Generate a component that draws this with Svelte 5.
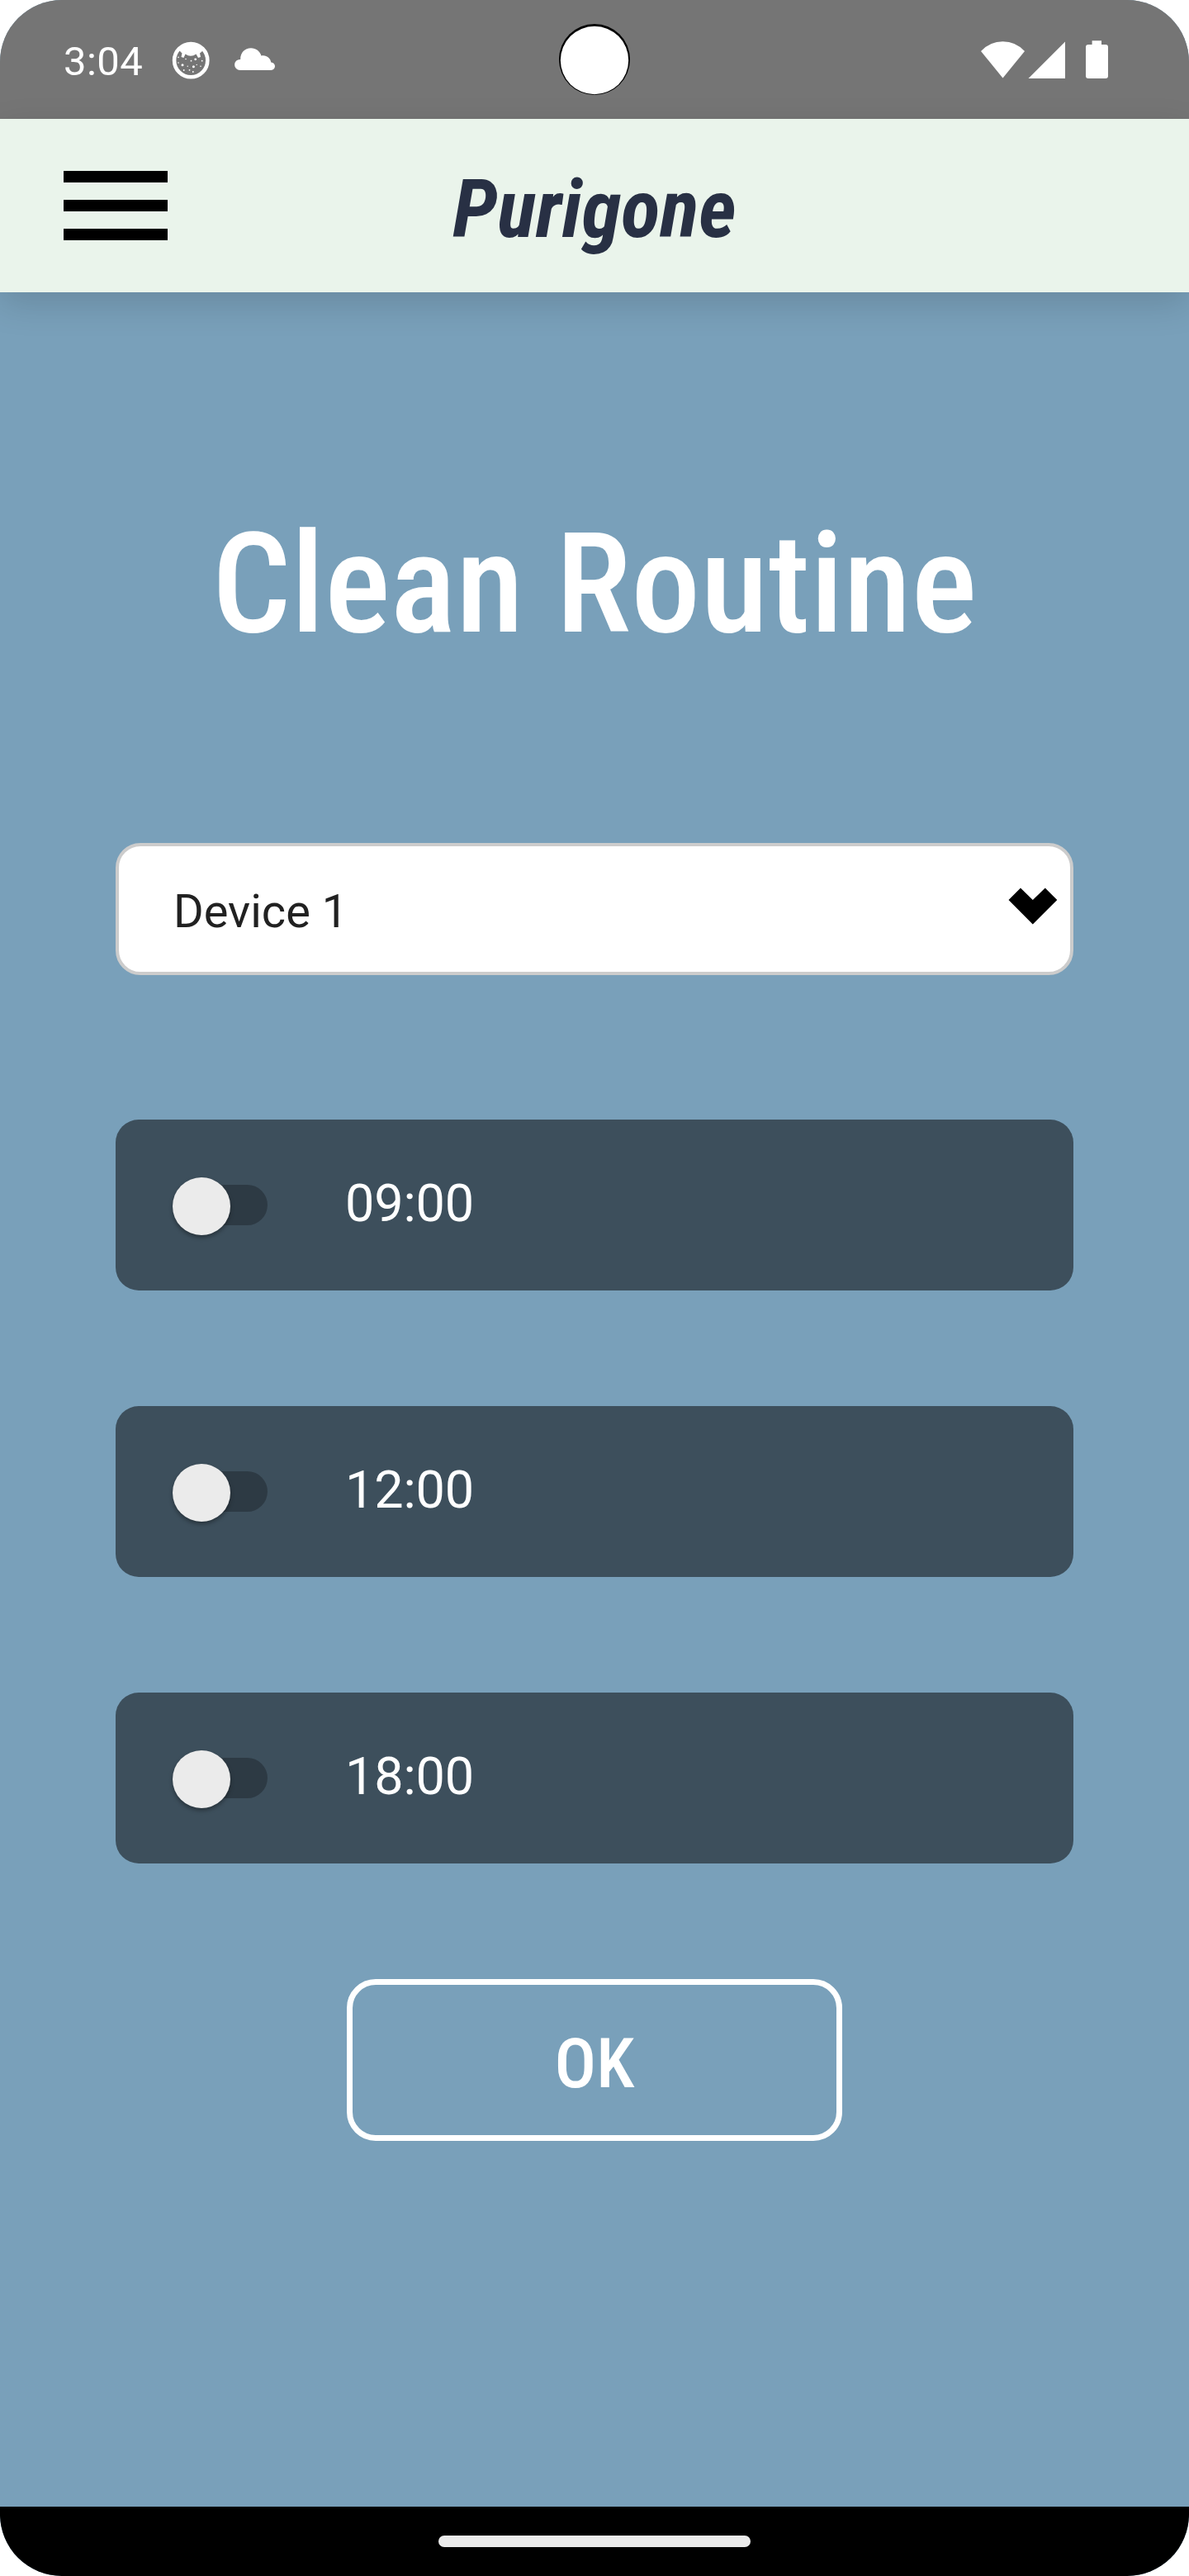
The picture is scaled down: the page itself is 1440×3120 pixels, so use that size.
<script>
  let routines = $state([
    { time: '09:00', on: false },
    { time: '12:00', on: false },
    { time: '18:00', on: false }
  ]);
</script>

<div class="phone">
  <div class="status">
    <span class="clock">3:04</span>
    <svg class="face" width="46" height="46" viewBox="0 0 46 46">
      <circle cx="23.2" cy="23.2" r="20.1" fill="none" stroke="#fff" stroke-width="4.6" />
      <path
        d="M8 8 Q23 -2 38 8 L36.5 12.5 L34 14.5 L35 19 L32 20 L29.5 15.5 Q23 20 16.5 15.5 L14.5 20 L11.5 19 L12.5 14.5 L9.5 11.5Z"
        fill="#fff"
      />
      <g fill="#fff">
        <circle cx="13" cy="28.7" r="1.5" /><circle cx="26.4" cy="30.8" r="1.5" />
        <circle cx="28.7" cy="21.8" r="1.4" /><circle cx="8" cy="19.4" r=".8" />
        <circle cx="8" cy="26" r=".8" /><circle cx="17" cy="21.5" r=".8" />
        <circle cx="23.5" cy="23.7" r=".9" /><circle cx="19.2" cy="30.2" r=".7" />
        <circle cx="30.2" cy="28.4" r=".7" /><circle cx="35" cy="30.2" r=".8" />
        <circle cx="36.7" cy="23.7" r=".9" /><circle cx="14.7" cy="35" r=".9" />
        <circle cx="21.5" cy="34.8" r=".9" /><circle cx="25.8" cy="37" r=".9" />
      </g>
    </svg>
    <svg class="cloud" width="50" height="28" viewBox="0 0 50 28">
      <path
        d="M6.6 26.900a6.500 6.500 0 0 1 0-13h.6C6.900 5.800 12.600.2 20 .2c5.800 0 10.900 3.900 12.400 9.200 6-1.300 11.200 2.600 11.900 8.200 2.900.3 4.700 2.300 4.700 4.700 0 2.600-2 4.600-4.600 4.600Z"
        fill="#fff"
      />
    </svg>
    <svg class="signals" width="156" height="48" viewBox="0 0 156 48" fill="#fff">
      <path d="M0 14 Q11 2.3 26.5 2.3 T53 14 L26.5 46.5Z" />
      <path d="M57.5 47 102 2.5V47Z" />
      <path d="M134.6 1.3h11.4v4.8h5a3 3 0 0 1 3 3V44a3 3 0 0 1-3 3h-21a3 3 0 0 1-3-3V9.100a3 3 0 0 1 3-3h4.600Z" />
    </svg>
    <svg class="camera" width="88" height="88" viewBox="0 0 88 88">
      <circle cx="44" cy="44" r="43" fill="#000" />
      <circle cx="44" cy="45" r="41.200" fill="#fff" />
    </svg>
  </div>

  <header>
    <button class="menu" aria-label="Menu"><i></i><i></i><i></i></button>
    <div class="brand">Purigone</div>
  </header>

  <main>
    <h1>Clean Routine</h1>

    <div class="select">
      <span>Device 1</span>
      <svg width="60" height="46" viewBox="0 0 60 46">
        <path d="M.5 15 15 .5 29.800 15 44.800 .5 59.300 15 29.800 44.500Z" />
      </svg>
    </div>

    {#each routines as routine}
      <div class="card">
        <button
          class="switch"
          class:on={routine.on}
          aria-label={routine.time}
          onclick={() => (routine.on = !routine.on)}
        >
          <span class="thumb"></span>
        </button>
        <span class="time">{routine.time}</span>
      </div>
    {/each}

    <button class="ok">OK</button>
  </main>

  <footer><span></span></footer>
</div>

<style>
  :global(body) {
    margin: 0;
    background: #fff;
  }
  .phone {
    width: 1440px;
    height: 3120px;
    display: flex;
    flex-direction: column;
    border-radius: 75px;
    overflow: hidden;
    background: #79a0ba;
    font-family: Roboto, sans-serif;
  }
  button {
    padding: 0;
    border: 0;
    background: none;
    font: inherit;
    color: inherit;
  }
  svg {
    display: block;
    flex: none;
  }
  .status {
    position: relative;
    flex: none;
    box-sizing: border-box;
    height: 144px;
    padding: 2px 96px 0 77px;
    display: flex;
    align-items: center;
    background: #757575;
    color: #fff;
  }
  .clock {
    width: 131px;
    margin-top: 3px;
    font-size: 49px;
    line-height: 57px;
    letter-spacing: 0.4px;
  }
  .cloud {
    margin: -2px 0 0 30px;
  }
  .signals {
    margin: -2px 0 0 auto;
  }
  .camera {
    position: absolute;
    left: 676px;
    top: 28px;
  }
  header {
    position: relative;
    flex: none;
    box-sizing: border-box;
    height: 210px;
    padding: 0 77px;
    display: grid;
    grid-template-columns: 126px 1fr 126px;
    background: #eaf4eb;
    box-shadow: 0 14px 40px rgba(0, 0, 0, 0.14);
  }
  .menu {
    display: flex;
    flex-direction: column;
    gap: 21px;
    padding-top: 63px;
  }
  .menu i {
    width: 126px;
    height: 14px;
    background: #000;
  }
  .brand {
    padding-top: 52px;
    text-align: center;
    font: italic 700 98px/115px 'Roboto Condensed', Roboto, sans-serif;
    color: #283044;
  }
  main {
    flex: 1;
    display: flex;
    flex-direction: column;
    align-items: center;
    padding: 0 140px;
  }
  h1 {
    margin: 255px 0 0;
    height: 412px;
    font: 540 168px/197px 'Roboto Condensed', Roboto, sans-serif;
    white-space: nowrap;
    color: #fff;
  }
  .select {
    flex: none;
    box-sizing: border-box;
    width: 1160px;
    height: 160px;
    margin-bottom: 175px;
    padding: 0 15px 0 66px;
    display: flex;
    align-items: center;
    justify-content: space-between;
    border: 4px solid #ccc;
    border-radius: 30px;
    background: #fff;
    font-size: 56px;
    line-height: 66px;
    color: #212121;
  }
  .select span {
    padding-top: 6px;
  }
  .select svg {
    margin-top: -6px;
  }
  .card {
    flex: none;
    box-sizing: border-box;
    width: 1160px;
    height: 207px;
    margin-bottom: 140px;
    padding-left: 69px;
    display: flex;
    align-items: center;
    border-radius: 28px;
    background: #3d4f5c;
  }
  .switch {
    width: 115px;
    height: 49px;
    margin-right: 94px;
    display: flex;
    align-items: center;
    border-radius: 25px;
    background: linear-gradient(90deg, transparent 10px, #2d3a44 10px);
  }
  .switch.on {
    justify-content: flex-end;
  }
  .thumb {
    width: 70px;
    height: 70px;
    margin-top: 2px;
    flex: none;
    border-radius: 50%;
    background: #ebebeb;
    box-shadow: 0 3px 5px rgba(0, 0, 0, 0.35);
  }
  .time {
    font-size: 63px;
    line-height: 74px;
    margin-top: -4px;
    letter-spacing: -0.2px;
    color: #fff;
  }
  .ok {
    flex: none;
    box-sizing: border-box;
    width: 600px;
    height: 196px;
    padding-top: 9px;
    border: 7px solid #fff;
    border-radius: 35px;
    font: 540 84px/99px 'Roboto Condensed', Roboto, sans-serif;
    color: #fff;
  }
  footer {
    flex: none;
    height: 84px;
    display: flex;
    align-items: center;
    justify-content: center;
    background: #000;
  }
  footer span {
    width: 378px;
    height: 14px;
    border-radius: 7px;
    background: #ebebeb;
  }
</style>
